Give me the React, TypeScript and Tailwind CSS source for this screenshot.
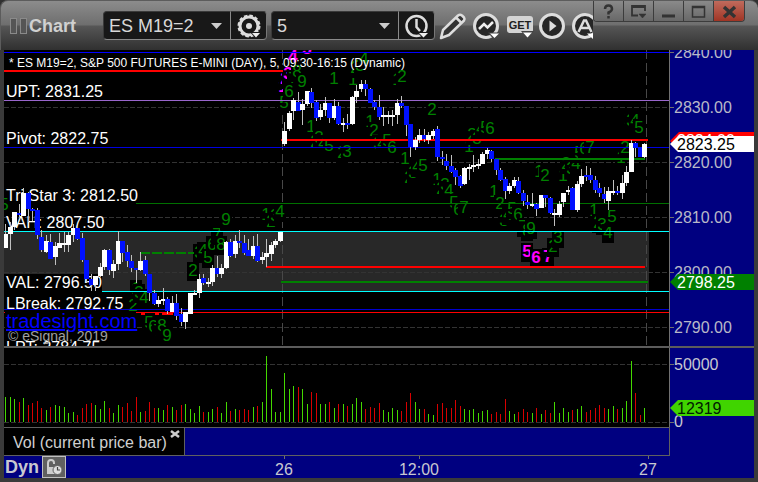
import React from "react";

// [wick top, wick bottom, body top, body bottom, up]
type Candle = [number, number, number, number, number];
// [digit, center x, center y]
type Count = [string, number, number];

const candles: Candle[] = [
  [224, 248, 234, 248, 1], [222, 250, 227, 234, 1], [212, 230, 212, 227, 1], [204, 217, 213, 215, 0],
  [188, 216, 193, 216, 1], [192, 222, 193, 209, 0], [208, 221, 209, 211, 0], [208, 239, 210, 235, 0],
  [230, 252, 237, 250, 0], [235, 253, 241, 252, 1], [234, 259, 242, 259, 0], [242, 265, 246, 257, 1],
  [233, 248, 243, 248, 1], [232, 252, 243, 245, 1], [232, 252, 235, 245, 1], [224, 242, 228, 235, 1],
  [228, 240, 228, 239, 0], [233, 262, 238, 260, 0], [260, 282, 260, 279, 0], [274, 291, 279, 285, 0],
  [276, 291, 276, 285, 1], [263, 277, 267, 276, 1], [249, 270, 250, 267, 1], [249, 275, 250, 270, 0],
  [260, 278, 264, 271, 1], [231, 270, 241, 264, 1], [241, 262, 241, 253, 0], [245, 267, 252, 261, 0],
  [255, 272, 261, 268, 0], [268, 283, 268, 270, 0], [252, 271, 261, 270, 1], [256, 276, 260, 274, 0],
  [274, 301, 274, 293, 0], [290, 305, 293, 304, 0], [296, 307, 300, 304, 1], [288, 305, 299, 301, 1],
  [297, 314, 299, 311, 0], [296, 312, 303, 312, 1], [294, 320, 303, 316, 0], [308, 326, 314, 322, 0],
  [312, 329, 312, 322, 1], [293, 314, 293, 314, 1], [290, 295, 293, 295, 1], [274, 298, 279, 293, 1],
  [274, 285, 278, 283, 0], [278, 287, 282, 284, 1], [265, 286, 268, 282, 1], [256, 277, 268, 274, 0],
  [264, 278, 268, 274, 1], [241, 269, 242, 268, 1], [239, 257, 242, 256, 0], [235, 258, 241, 254, 1],
  [230, 248, 241, 243, 0], [235, 255, 243, 253, 0], [239, 256, 250, 256, 0], [236, 259, 246, 256, 1],
  [234, 262, 246, 261, 0], [252, 264, 257, 260, 1], [239, 267, 253, 257, 1], [242, 261, 245, 254, 1],
  [239, 248, 241, 245, 1], [232, 242, 232, 241, 1], [122, 146, 131, 144, 1], [111, 131, 113, 129, 1],
  [98, 120, 100, 111, 1], [92, 111, 102, 111, 0], [99, 125, 104, 110, 1], [91, 106, 91, 104, 1],
  [88, 108, 92, 103, 0], [100, 121, 102, 118, 0], [104, 120, 110, 117, 1], [97, 116, 103, 110, 1],
  [103, 123, 103, 118, 0], [99, 120, 106, 118, 1], [102, 125, 106, 124, 0], [118, 132, 123, 125, 1],
  [114, 129, 123, 125, 0], [96, 125, 97, 124, 1], [85, 103, 91, 97, 1], [80, 92, 84, 89, 1],
  [80, 96, 84, 89, 0], [88, 103, 89, 103, 0], [100, 110, 102, 107, 0], [95, 120, 107, 117, 0],
  [107, 126, 115, 117, 1], [111, 124, 115, 117, 1], [110, 126, 115, 117, 1], [99, 124, 103, 115, 1],
  [96, 108, 103, 106, 0], [106, 136, 106, 125, 0], [124, 157, 124, 147, 0], [137, 150, 140, 147, 1],
  [129, 143, 135, 140, 1], [129, 142, 135, 139, 0], [132, 144, 135, 140, 1], [129, 139, 131, 136, 1],
  [126, 161, 129, 157, 0], [151, 165, 157, 159, 0], [154, 170, 161, 166, 0], [155, 173, 166, 172, 0],
  [168, 185, 170, 177, 0], [175, 188, 176, 186, 0], [167, 185, 168, 184, 1], [164, 180, 167, 169, 1],
  [155, 172, 165, 167, 1], [159, 169, 164, 166, 1], [152, 164, 154, 164, 1], [148, 159, 150, 154, 1],
  [150, 162, 151, 159, 0], [159, 175, 159, 170, 0], [168, 181, 170, 180, 0], [177, 199, 179, 191, 0],
  [183, 194, 186, 191, 1], [177, 188, 180, 186, 1], [177, 194, 181, 193, 0], [190, 206, 193, 201, 0],
  [195, 209, 202, 205, 0], [193, 207, 204, 206, 1], [203, 216, 204, 209, 0], [195, 208, 195, 208, 1],
  [195, 207, 195, 198, 0], [197, 214, 198, 213, 0], [209, 226, 213, 215, 1], [201, 217, 204, 215, 1],
  [193, 207, 193, 202, 1], [186, 195, 190, 192, 1], [187, 210, 188, 210, 0], [181, 212, 184, 210, 1],
  [169, 187, 176, 184, 1], [166, 181, 175, 177, 0], [168, 183, 175, 180, 0], [176, 193, 180, 190, 0],
  [183, 197, 188, 193, 0], [187, 203, 194, 199, 0], [187, 210, 191, 201, 1], [180, 195, 191, 193, 1],
  [186, 195, 191, 193, 0], [175, 199, 183, 193, 1], [166, 186, 172, 183, 1], [140, 172, 143, 172, 1],
  [142, 157, 143, 148, 0], [147, 157, 147, 157, 0], [143, 158, 144, 157, 1],
];

// positive = up volume, negative = down volume
const volumes = [
  25, 25, 23, -20, 24, -17, -19, -21, -14, 12, -15, 17, 16, 15, 9, 10, -7, -14, -18, -19,
  17, 13, 21, -14, 9, 17, -15, -19, -11, -25, 10, -11, -20, -14, 14, 12, -17, 15, -12, -17,
  18, 13, 9, 16, -10, 10, 13, -15, 9, 20, -11, 13, -12, -13, -12, 15, -16, 20, 66, 33,
  10, 10, 49, 33, 36, -35, 33, 18, -30, -29, 18, 18, -20, 14, -18, 18, -16, 18, 24, 20,
  -13, -15, -14, -19, 12, 10, 14, 12, -11, -20, -29, 20, 13, -13, 8, 7, -18, -19, -14, -14,
  -22, -16, 13, 12, 13, 9, 11, 12, -8, -10, -8, -23, 11, 8, -10, -13, -10, 9, -14, 8,
  -12, -9, 20, 9, 14, 10, -12, 13, 16, -10, -12, -14, -17, -14, 13, 16, -13, 14, 21, 61,
  -29, -7, 14,
];

const counts: Count[] = [
  ["5", 4, 204],
  ["1", 136, 288], ["2", 133, 305], ["3", 139, 292], ["4", 144, 297],
  ["5", 149, 322], ["6", 153, 326], ["7", 158, 330], ["8", 162, 325], ["9", 167, 335],
  ["2", 193, 270], ["3", 199, 252], ["4", 203, 250], ["5", 208, 257], ["6", 212, 244],
  ["7", 217, 234], ["8", 221, 244], ["9", 226, 219],
  ["1", 266, 214], ["2", 271, 221], ["3", 275, 215], ["4", 280, 211],
  ["7", 293, 78], ["8", 297, 71], ["5", 284, 102], ["6", 289, 91], ["9", 302, 81],
  ["1", 334, 78], ["1", 353, 79], ["2", 355, 67], ["3", 360, 65], ["4", 364, 58],
  ["1", 397, 79], ["2", 402, 76], ["2", 432, 109],
  ["1", 311, 126], ["2", 315, 141], ["3", 319, 137], ["4", 323, 143], ["5", 329, 145],
  ["2", 342, 152], ["3", 347, 151],
  ["1", 370, 121], ["2", 374, 130], ["3", 378, 143], ["4", 382, 143], ["5", 387, 140], ["6", 392, 147],
  ["1", 405, 158], ["2", 409, 177], ["3", 413, 172], ["4", 417, 166], ["5", 423, 165],
  ["1", 437, 179], ["2", 441, 188], ["3", 445, 184], ["4", 449, 190], ["5", 454, 202], ["6", 458, 209], ["7", 464, 207],
  ["1", 469, 146], ["2", 472, 134], ["3", 477, 138], ["4", 481, 128], ["5", 485, 127], ["6", 490, 128],
  ["1", 494, 191], ["2", 500, 203], ["3", 504, 220], ["4", 508, 214], ["5", 512, 208], ["6", 518, 214],
  ["7", 523, 226], ["8", 527, 230], ["9", 531, 228],
  ["1", 539, 171], ["2", 545, 175],
  ["1", 563, 175], ["2", 566, 163], ["3", 571, 168], ["4", 576, 163],
  ["5", 579, 152], ["6", 584, 148], ["7", 590, 147],
  ["1", 594, 210], ["2", 598, 222], ["3", 602, 224], ["4", 608, 232], ["5", 612, 216],
  ["1", 621, 157], ["2", 625, 147],
  ["2", 629, 118], ["3", 631, 120], ["4", 635, 120], ["5", 639, 127],
];

const boldCounts: Count[] = [
  ["1", 283, 86], ["2", 285, 78], ["3", 288, 73], ["4", 293, 56], ["5", 307, 48],
  ["5", 527, 251], ["6", 536, 257], ["7", 548, 256],
];

const levels = [
  { text: "UPT: 2831.25", y: 97 },
  { text: "Pivot: 2822.75", y: 144 },
  { text: "Tri Star 3: 2812.50", y: 201 },
  { text: "VAH: 2807.50", y: 228 },
  { text: "LPT: 2784.75", y: 353 },
  { text: "VAL: 2796.50", y: 288 },
  { text: "LBreak: 2792.75", y: 309 },
];

const priceTicks = [
  { text: "2840.00", y: 52 },
  { text: "2830.00", y: 107 },
  { text: "2820.00", y: 162 },
  { text: "2810.00", y: 217 },
  { text: "2800.00", y: 272 },
  { text: "2790.00", y: 327 },
];

const barX = (i: number) => Math.floor(5.5 + i * 4.5);

const CountMark = ({ count, bold }: { count: Count; bold?: boolean }) => {
  const [digit, x, y] = count;
  return (
    <g>
      <rect x={x - 6} y={y - 8} width={12} height={19} fill="#000" />
      <text
        x={x}
        y={y + 6}
        textAnchor="middle"
        className={bold ? "text-[17px] font-bold" : "text-[17px]"}
        fill={bold ? "#ff00ff" : "#008000"}
      >
        {digit}
      </text>
    </g>
  );
};

const HLine = ({ y, color, from = 4, to, h = 1 }: { y: number; color: string; from?: number; to?: number; h?: number }) => (
  <rect x={from} y={y} width={to ? to - from : "100%"} height={h} fill={color} />
);

const PricePlot = () => (
  <svg className="min-h-[296px] min-w-0 flex-1 self-stretch bg-black" role="img" aria-label="Price chart">
    <g transform="translate(-4 -50)">
      <rect x={4} y={232} width={645} height={59} fill="#282828" />
      {priceTicks.map((t) => (
        <line key={t.text} x1={4} x2={669} y1={t.y + 0.5} y2={t.y + 0.5} stroke="#333" strokeDasharray="5 2" />
      ))}
      <path d="M282.5 50V346M646.5 50V346" stroke="#484848" strokeDasharray="9 4" />

      {boldCounts.slice(0, 5).map((c) => (
        <CountMark key={c.join()} count={c} bold />
      ))}
      {counts.map((c) => (
        <CountMark key={c.join()} count={c} />
      ))}
      {boldCounts.slice(5).map((c) => (
        <CountMark key={c.join()} count={c} bold />
      ))}
      <CountMark count={["2", 553, 246]} />
      <CountMark count={["3", 558, 237]} />

      {/* Level lines */}
      <HLine y={52} color="#0000ff" />
      <HLine y={70} color="#ff0000" to={283} h={2} />
      <HLine y={100} color="#9966cc" />
      <HLine y={139} color="#ff0000" from={281} to={648} h={2} />
      <HLine y={147} color="#0000e0" />
      <HLine y={158} color="#008000" from={495} to={645} h={2} />
      <HLine y={203} color="#007000" from={136} />
      <HLine y={231} color="#00ffff" />
      <path d="M140 253H194" stroke="#008000" strokeWidth={2} strokeDasharray="10 2" />
      <HLine y={266} color="#ff0000" from={266} to={645} h={2} />
      <HLine y={281} color="#008000" from={281} to={648} h={2} />
      <HLine y={291} color="#00ffff" />
      <HLine y={309} color="#0000d0" />
      <HLine y={312} color="#ff0000" />
      <path d="M141 314H145M155 314H159M162 314H173" stroke="#ff0000" strokeWidth={2} />

      {/* Level captions */}
      <rect x={4} y={274} width={98} height={18} fill="#000" />
      <rect x={5} y={311} width={131} height={17} fill="#000" />
      {levels.map((l) => (
        <text key={l.text} x={6} y={l.y} className="text-base" fill="#fff">
          {l.text}
        </text>
      ))}
      <text x={8} y={341} className="text-sm" fill="#a0a0a0">
        © eSignal, 2019
      </text>
      <a href="#tradesight">
        <text x={6} y={328} className="text-xl underline" fill="#0000ff">
          tradesight.com
        </text>
      </a>

      <g shapeRendering="crispEdges">
        {candles.map(([high, low, top, bottom, up], i) => (
          <g key={i}>
            <rect x={barX(i)} y={high} width={1} height={low - high} fill="#c0c0c0" />
            <rect x={barX(i) - 2} y={top} width={5} height={bottom - top} fill={up ? "#fff" : "#0010ff"} />
          </g>
        ))}
      </g>
      <text x={9} y={67} className="text-xs" fill="#fff">
        * ES M19=2, S&amp;P 500 FUTURES E-MINI (DAY), 5, 09:30-16:15 (Dynamic)
      </text>
    </g>
  </svg>
);

const PriceAxis = () => (
  <svg className="min-h-[296px] w-[85px] shrink-0 self-stretch border-l border-[#707070] bg-[#000080]" role="img" aria-label="Price axis">
    <g transform="translate(-670 -50)" className="text-base">
      {priceTicks.map((t) => (
        <g key={t.text} fill="#b8b8c8">
          <rect x={670} y={t.y} width={4} height={1} fill="#707070" />
          <text x={674} y={t.y + 6}>{t.text}</text>
        </g>
      ))}
      <path d="M670 141L679 132H754V150H679Z" fill="#ff0000" />
      <text x={677} y={146} fill="#fff">2824.00</text>
      <path d="M670 144L678 136H754V152H678Z" fill="#fff" />
      <text x={677} y={150} fill="#000">2823.25</text>
      <path d="M670 282L678 274H754V290H678Z" fill="#008000" />
      <text x={677} y={288} fill="#fff">2798.25</text>
    </g>
  </svg>
);

const VolumePlot = () => (
  <svg className="h-[79px] min-w-0 flex-1 bg-black" role="img" aria-label="Volume chart">
    <g transform="translate(-4 -348)">
      <path d="M4 364.5H669M4 422.5H669" stroke="#333" strokeDasharray="5 2" />
      <g shapeRendering="crispEdges">
        {volumes.map((v, i) => (
          <rect
            key={i}
            x={barX(i)}
            y={422 - Math.abs(v)}
            width={1}
            height={Math.abs(v)}
            fill={v > 0 ? "#44d800" : "#d80000"}
          />
        ))}
      </g>
    </g>
  </svg>
);

const VolumeAxis = () => (
  <svg className="h-[79px] w-[85px] shrink-0 border-l border-[#707070] bg-[#000080]" role="img" aria-label="Volume axis">
    <g transform="translate(-670 -348)" className="text-base">
      <path d="M670 364.5H674M670 422.5H674" stroke="#707070" />
      <text x={674} y={370} fill="#c8c8d0">50000</text>
      <text x={674} y={427} fill="#c8c8d0">0</text>
      <path d="M670 408L678 400H754V416H678Z" fill="#40d400" />
      <text x={677} y={414} fill="#002000">12319</text>
    </g>
  </svg>
);

const Arrow = () => (
  <svg className="pointer-events-none absolute top-[11px] right-2 h-[6px] w-[11px]" viewBox="0 0 11 6">
    <path d="M0 0H11L5.5 6Z" fill="#ccc" />
  </svg>
);

const ComboBox = ({ label, value }: { label: string; value: string }) => (
  <label className="relative block h-[29px] w-[127px] shrink-0 rounded-l border border-r-0 border-t-[#3a3a3a] border-l-[#3a3a3a] border-b-[#8a8a8a] bg-[#181818]">
    <select
      aria-label={label}
      className="h-full w-full appearance-none bg-transparent pl-[5px] text-lg leading-none text-[#d8d8d8] outline-none"
      defaultValue={value}
    >
      <option>{value}</option>
    </select>
    <Arrow />
  </label>
);

const boxButton =
  "flex h-[29px] w-[37px] shrink-0 items-center justify-center rounded-r border border-t-[#3a3a3a] border-r-[#777] border-b-[#8a8a8a] border-l-[#8a8a8a] bg-[#181818]";

const GearIcon = () => (
  <svg width="26" height="26" viewBox="0 0 26 26">
    <circle cx="13" cy="13" r="9" fill="none" stroke="#ddd" strokeWidth="3" />
    <circle cx="13" cy="13" r="10.5" fill="none" stroke="#ddd" strokeWidth="2" strokeDasharray="3.5 2" />
    <circle cx="13" cy="13" r="3" fill="#ddd" />
    <path d="M14 19H26L20 26Z" fill="#181818" />
    <path d="M16 20H24L20 24.5Z" fill="#eee" />
  </svg>
);

const ClockIcon = () => (
  <svg width="26" height="26" viewBox="0 0 26 26">
    <circle cx="12.5" cy="13" r="10" fill="none" stroke="#ddd" strokeWidth="2.5" />
    <path d="M12.5 6V14L16 18" fill="none" stroke="#ddd" strokeWidth="2.5" />
    <path d="M13 19H26L19.5 26Z" fill="#181818" />
    <path d="M15 20H24L19.5 24.5Z" fill="#eee" />
  </svg>
);

const PencilIcon = () => (
  <svg width="28" height="28" viewBox="0 0 28 28" fill="#333" stroke="#ddd" strokeWidth="2.5" strokeLinejoin="round">
    <path d="M2 26L4 18L19 3.5Q21 2 23 3.5L25 5.5Q26 7 25 8.5L10 23Z" />
    <path d="M17 5.5L22.5 11" />
  </svg>
);

const WaveIcon = () => (
  <svg width="27" height="28" viewBox="0 0 27 28">
    <circle cx="13" cy="14" r="11.5" fill="#262626" stroke="#ddd" strokeWidth="3" />
    <path d="M6 17L11 12L14.5 15.5L20 10" fill="none" stroke="#eee" strokeWidth="2.5" />
    <path d="M15 20.5H27L21 28Z" fill="#444" />
    <path d="M17 21.5H26L21.5 26Z" fill="#fff" />
  </svg>
);

const GetIcon = () => (
  <svg width="28" height="26" viewBox="0 0 28 26">
    <rect x="1" y="3" width="26" height="17" rx="3" fill="#d4d4d4" />
    <text x="14" y="16" textAnchor="middle" className="font-['Liberation_Sans',sans-serif] text-[11px] font-bold" fill="#202020">
      GET
    </text>
    <path d="M15 18H28L21.5 26Z" fill="#444" />
    <path d="M17 19.5H26L21.5 24.5Z" fill="#fff" />
  </svg>
);

const PlayIcon = () => (
  <svg width="26" height="26" viewBox="0 0 26 26">
    <circle cx="13" cy="13" r="11.5" fill="#262626" stroke="#ddd" strokeWidth="3" />
    <path d="M10.5 7.5L17.5 13L10.5 18.5Z" fill="#ddd" />
  </svg>
);

const AlertIcon = () => (
  <svg width="26" height="26" viewBox="0 0 26 26">
    <circle cx="13" cy="13" r="11.5" fill="#262626" stroke="#ddd" strokeWidth="3" />
    <path d="M6.5 19L12 7.5H14L19.5 19M8.5 15H17.5" fill="none" stroke="#ddd" strokeWidth="2.5" />
    <path d="M15 20.5H26L21 26Z" fill="#fff" />
  </svg>
);

const tools = [
  { label: "Draw", icon: <PencilIcon />, width: "w-[34px]" },
  { label: "Studies", icon: <WaveIcon />, width: "w-[33px]" },
  { label: "GET studies", icon: <GetIcon />, width: "w-[33px]" },
  { label: "Play", icon: <PlayIcon />, width: "w-[33px]" },
  { label: "Alerts", icon: <AlertIcon />, width: "w-[26px]" },
];

const windowButtons = [
  {
    label: "Help",
    icon: <path d="M4 5Q4 1.5 7.5 1.5T11 5Q11 7 7.5 8.5V10.5M7.5 12V14.5" />,
  },
  {
    label: "Pop out",
    icon: (
      <>
        <path d="M7 11.5H1V2H14V7M1 3H14" strokeWidth="1.8" />
        <path d="M8 10H15L11.5 14Z" fill="#333" strokeWidth="0.5" />
      </>
    ),
  },
  { label: "Minimize", icon: <path d="M1 12H14" strokeWidth="3" /> },
  { label: "Maximize", icon: <path d="M1.5 2.5H13.5V13H1.5ZM1.5 3.5H13.5" strokeWidth="1.5" /> },
  { label: "Close", icon: <path d="M2 3L13 13M13 3L2 13" strokeWidth="3.5" /> },
];

const TitleBar = () => (
  <header className="flex h-[50px] shrink-0 items-start rounded-t-lg border-t border-l border-[#5c5c5c] bg-[linear-gradient(#8c8c8c_0%,#6e6e6e_49%,#565656_51%,#303030_100%)]">
    <div className="flex h-full min-w-0 flex-1 items-center overflow-hidden pl-[9px]">
      <div className="flex shrink-0 gap-[3px]">
        <span className="h-4 w-[7px] border border-[#8a8a8a] bg-[#555]" />
        <span className="h-4 w-[7px] border border-[#8a8a8a] bg-[#555]" />
      </div>
      <h1 className="w-[76px] shrink-0 pl-[2px] text-lg leading-none font-bold text-[#d0d0d0]">Chart</h1>
      <ComboBox label="Symbol" value="ES M19=2" />
      <button aria-label="Symbol settings" className={boxButton}>
        <GearIcon />
      </button>
      <div className="w-1 shrink-0" />
      <ComboBox label="Interval" value="5" />
      <button aria-label="Time template" className={boxButton}>
        <ClockIcon />
      </button>
      <div className="flex shrink-0 items-center pl-1">
        {tools.map((t) => (
          <button key={t.label} aria-label={t.label} className={`flex shrink-0 items-center ${t.width}`}>
            {t.icon}
          </button>
        ))}
      </div>
    </div>
    <div className="mr-[13px] flex h-[21px] shrink-0 overflow-hidden rounded-b border border-t-0 border-[#3c3c3c]">
      {windowButtons.map((b) => (
        <button
          key={b.label}
          aria-label={b.label}
          className={`flex w-[30px] items-center justify-center border-r border-[#3c3c3c] last:border-r-0 ${
            b.label === "Close"
              ? "bg-linear-to-b from-[#c06a5c] to-[#a03424]"
              : "bg-linear-to-b from-[#8a8a8a] to-[#686868]"
          }`}
        >
          <svg width="15" height="15" viewBox="0 0 15 15" fill="none" stroke="#333" strokeWidth="2.5">
            {b.icon}
          </svg>
        </button>
      ))}
    </div>
  </header>
);

const TimeAxis = () => (
  <svg className="h-[22px] min-w-0 flex-1" role="img" aria-label="Time axis">
    <g transform="translate(-66 -456)" className="text-base" fill="#c8c8d0">
      <path d="M284.5 456V459M419.5 456V459M648.5 456V459" stroke="#707070" />
      <text x={284} y={475} textAnchor="middle">26</text>
      <text x={419} y={475} textAnchor="middle">12:00</text>
      <text x={648} y={475} textAnchor="middle">27</text>
    </g>
  </svg>
);

const App: React.FC = () => {
  return (
    <div className="flex min-h-screen flex-col bg-[#303030] font-['Liberation_Sans',Arial,sans-serif]">
      <TitleBar />
      <main className="flex flex-1 flex-col border-x-4 border-b-4 border-[#3a3a3a] bg-[#000080]">
        <section className="flex flex-1">
          <PricePlot />
          <PriceAxis />
        </section>
        <div className="h-[2px] bg-[#5c5c5c]" />
        <section className="flex">
          <VolumePlot />
          <VolumeAxis />
        </section>

        {/* Study tab */}
        <div className="mr-[84px] flex h-[29px] border-t border-r border-b border-[#606060]">
          <div className="flex w-[181px] items-start border-r border-[#606060] bg-black pl-[9px]">
            <span className="pt-[7px] text-base leading-4 whitespace-nowrap text-[#d0d0d0]">Vol (current price bar)</span>
            <button aria-label="Close study" className="mt-[2px] ml-[3px]">
              <svg width="10" height="8" viewBox="0 0 10 8">
                <path d="M1 1L9 7M9 1L1 7" stroke="#ccc" strokeWidth="2.5" />
              </svg>
            </button>
          </div>
        </div>

        <div className="flex h-[22px]">
          <button className="w-[38px] shrink-0 pl-px text-left text-lg leading-[22px] font-bold text-[#c8c8d0]">Dyn</button>
          <button aria-label="Lock time axis" className="flex w-6 shrink-0 items-center justify-center border border-[#c0c0c0] bg-[#606060]">
            <svg width="18" height="18" viewBox="0 0 18 18">
              <path d="M3 9V5Q3 2 6 2T9 5V6" fill="none" stroke="#ccc" strokeWidth="2" />
              <rect x="2" y="9" width="9" height="7" fill="#ccc" />
              <circle cx="12.5" cy="12" r="4.5" fill="#ddd" stroke="#606060" />
              <path d="M12.5 9V12H15" fill="none" stroke="#444" strokeWidth="1.2" />
            </svg>
          </button>
          <TimeAxis />
        </div>
      </main>
    </div>
  );
};

export default App;
